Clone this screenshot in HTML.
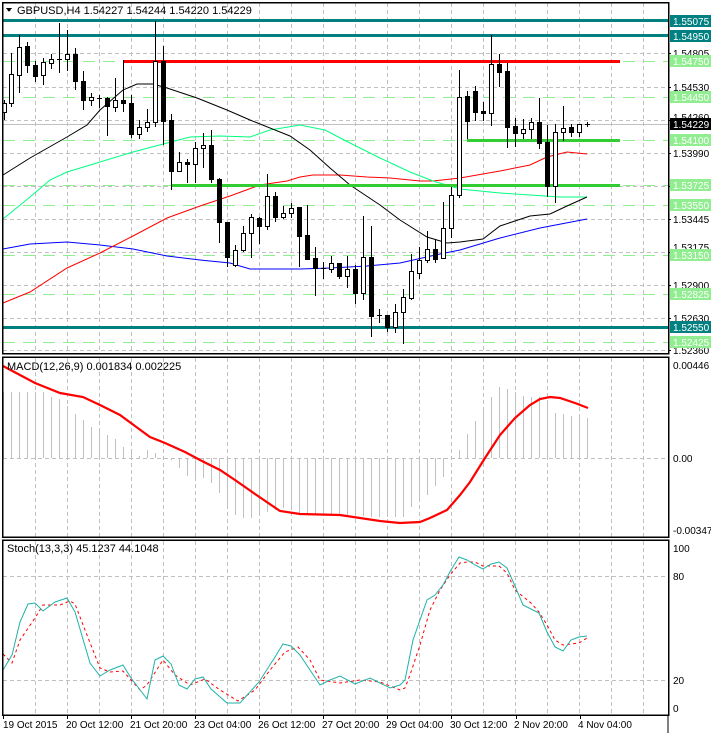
<!DOCTYPE html>
<html><head><meta charset="utf-8"><style>
html,body{margin:0;padding:0;background:#fff;width:711px;height:733px;overflow:hidden}
svg{display:block;font-family:"Liberation Sans",sans-serif;font-size:10px}
</style></head><body>
<svg id="s" width="711" height="733" viewBox="0 0 711 733" xmlns="http://www.w3.org/2000/svg" shape-rendering="crispEdges">
<rect width="711" height="733" fill="#fff"/>
<g id="grid" stroke="#c0c0c0" stroke-dasharray="4,3" stroke-width="1"></g>
<g stroke="#90ee90" stroke-dasharray="12,8" stroke-width="1">
<line x1="3" y1="61.5" x2="668" y2="61.5"/><line x1="3" y1="97.5" x2="668" y2="97.5"/>
<line x1="3" y1="140.5" x2="668" y2="140.5"/><line x1="3" y1="185.5" x2="668" y2="185.5"/>
<line x1="3" y1="205.5" x2="668" y2="205.5"/><line x1="3" y1="255.5" x2="668" y2="255.5"/>
<line x1="3" y1="294.5" x2="668" y2="294.5"/><line x1="3" y1="342.5" x2="668" y2="342.5"/>
</g>
<line x1="3" y1="124.5" x2="668" y2="124.5" stroke="#c0c0c0"/>
<g id="hist" stroke="#c0c0c0" stroke-width="1"></g>
<g fill="none" stroke-width="1" shape-rendering="auto">
<polyline stroke="#0000ff" points="3,249 30,244 67,242 100,245 133,249 167,256 200,260 230,263 250,269 300,269 330,268 367,266 400,263 440,254 460,250 500,238 540,228 587,219"/>
<polyline stroke="#ff0000" points="3,303 30,292 67,268 100,253 133,236 167,218 200,206 230,196 260,185 287,181 300,177 313,175 340,175 367,177 390,178 420,181 433,181 460,178 500,171 530,165 547,157 567,152 587,154"/>
<polyline stroke="#00ff7f" points="3,219 30,197 50,180 67,172 100,162 133,152 167,143 190,137 220,136 250,137 270,130 300,125 325,130 350,143 380,158 410,172 433,181 460,189 500,193 530,195 560,197 587,197"/>
<polyline stroke="#000" points="3,175 30,158 67,137 87,125 100,110 123,90 137,84 153,84 167,88 197,98 227,110 250,120 290,136 310,150 330,168 350,185 380,205 400,220 427,237 447,243 460,242 483,239 500,226 530,216 550,214 567,206 587,197"/>
</g>
<g>
<rect x="3" y="19" width="665" height="3" fill="#008080"/>
<rect x="3" y="34" width="665" height="3" fill="#008080"/>
<rect x="3" y="326" width="665" height="3" fill="#008080"/>
<rect x="123" y="60" width="497" height="3" fill="#ff0000"/>
<rect x="467" y="139" width="153" height="3" fill="#32cd32"/>
<rect x="171" y="184" width="449" height="3" fill="#32cd32"/>
</g>
<g id="candles"></g>
<polyline fill="none" stroke="#ff0000" stroke-width="2.2" shape-rendering="auto" points="3,366 20,375 35,383 60,393 83,397 100,405 120,415 135,426 150,437 165,443 185,452 200,460 220,470 235,480 255,494 280,511 300,514 340,515 380,521 400,523 420,522 430,518 447,510 460,495 470,482 485,458 500,435 515,418 530,405 540,399 550,397 560,398 575,403 588,408"/>
<polyline fill="none" stroke="#ff0000" stroke-dasharray="3,3" shape-rendering="auto" points="3,654 12,663 20,640 35,618 43,605 60,605 70,601 75,604 85,630 100,668 110,672 123,671 140,690 147,685 163,660 175,675 190,685 205,679 220,690 238,701 255,690 270,670 285,652 298,647 310,660 320,680 340,683 360,680 380,682 400,690 405,688 410,675 420,645 430,610 440,590 450,575 460,563 467,562 475,562 483,566 499,566 507,573 515,590 531,603 539,612 547,625 555,640 563,645 571,644 579,643 587,638"/>
<polyline fill="none" stroke="#20b2aa" shape-rendering="auto" points="3,670 12,655 20,622 28,604 35,603 43,611 55,602 67,598 75,612 90,663 100,676 110,670 123,665 131,678 147,699 155,660 163,656 171,664 179,685 187,689 195,679 203,677 211,689 227,703 240,703 259,682 275,657 283,644 291,646 300,655 310,670 320,685 330,680 340,676 355,684 370,678 380,683 390,688 400,685 405,680 413,640 427,600 435,595 443,585 451,570 459,557 467,560 475,565 483,569 491,564 499,562 507,568 515,586 523,605 531,609 539,613 547,632 555,647 563,651 571,640 579,637 587,636"/>
<g fill="none" stroke="#000" stroke-width="1.5">
<rect x="2.5" y="2.5" width="666" height="351"/>
<rect x="2.5" y="357" width="666" height="180"/>
<rect x="2.5" y="540" width="666" height="175"/>
</g>
<g stroke="#000"><line x1="668" y1="715" x2="668" y2="733"/></g>
<g id="ticks" stroke="#000"></g>
<polygon points="6,8 12,8 9,12" fill="#000"/>
<text x="17" y="14" fill="#000" font-size="11">GBPUSD,H4  1.54227 1.54244 1.54220 1.54229</text>
<text x="7" y="370" fill="#000" font-size="11">MACD(12,26,9) 0.001834 0.002225</text>
<text x="7" y="552" fill="#000" font-size="11">Stoch(13,3,3) 45.1237 44.1048</text>
<g fill="#000">
<text x="673" y="57">1.54805</text><text x="673" y="91">1.54530</text><text x="673" y="121">1.54260</text>
<text x="673" y="157">1.53990</text><text x="673" y="223">1.53445</text><text x="673" y="251">1.53175</text>
<text x="673" y="289">1.52900</text><text x="673" y="322">1.52630</text><text x="673" y="354">1.52360</text>
</g>
<g>
<rect x="670" y="15" width="41" height="12" fill="#008080"/><text x="673" y="25" fill="#fff">1.55075</text>
<rect x="670" y="30" width="41" height="12" fill="#008080"/><text x="673" y="40" fill="#fff">1.54950</text>
<rect x="670" y="55" width="41" height="12" fill="#90ee90"/><text x="673" y="65" fill="#fff">1.54750</text>
<rect x="670" y="91" width="41" height="12" fill="#90ee90"/><text x="673" y="101" fill="#fff">1.54450</text>
<rect x="670" y="118" width="41" height="12" fill="#000"/><text x="673" y="128" fill="#fff">1.54229</text>
<rect x="670" y="134" width="41" height="12" fill="#90ee90"/><text x="673" y="144" fill="#fff">1.54100</text>
<rect x="670" y="179" width="41" height="12" fill="#90ee90"/><text x="673" y="189" fill="#fff">1.53725</text>
<rect x="670" y="199" width="41" height="12" fill="#90ee90"/><text x="673" y="209" fill="#fff">1.53550</text>
<rect x="670" y="249" width="41" height="12" fill="#90ee90"/><text x="673" y="259" fill="#fff">1.53150</text>
<rect x="670" y="288" width="41" height="12" fill="#90ee90"/><text x="673" y="298" fill="#fff">1.52825</text>
<rect x="670" y="321" width="41" height="12" fill="#008080"/><text x="673" y="331" fill="#fff">1.52550</text>
<rect x="670" y="336" width="41" height="12" fill="#90ee90"/><text x="673" y="346" fill="#fff">1.52425</text>
</g>
<g fill="#000">
<text x="673" y="369">0.00446</text><text x="673" y="462">0.00</text><text x="673" y="534">-0.003478</text>
<text x="673" y="552">100</text><text x="673" y="580">80</text><text x="673" y="684">20</text><text x="673" y="712">0</text>
</g>
<g fill="#000">
<text x="3" y="728">19 Oct 2015</text><text x="66" y="728">20 Oct 12:00</text><text x="130" y="728">21 Oct 20:00</text>
<text x="194" y="728">23 Oct 04:00</text><text x="258" y="728">26 Oct 12:00</text><text x="322" y="728">27 Oct 20:00</text>
<text x="386" y="728">29 Oct 04:00</text><text x="450" y="728">30 Oct 12:00</text><text x="514" y="728">2 Nov 20:00</text>
<text x="578" y="728">4 Nov 04:00</text>
</g>
</svg>
<script>
var NS="http://www.w3.org/2000/svg";
function el(p,t,a){var e=document.createElementNS(NS,t);for(var k in a)e.setAttribute(k,a[k]);p.appendChild(e);return e;}
var g=document.getElementById('grid');
for(var x=35;x<=648;x+=32){
 el(g,'line',{x1:x+.5,y1:3,x2:x+.5,y2:353});el(g,'line',{x1:x+.5,y1:358,x2:x+.5,y2:537});el(g,'line',{x1:x+.5,y1:541,x2:x+.5,y2:715});
}
[53,87,120,153,186,219,252,285,318,350,458,576,680].forEach(function(y){el(g,'line',{x1:3,y1:y+.5,x2:668,y2:y+.5});});
var tk=document.getElementById('ticks');
[3,67,131,195,259,323,387,451,516,580].forEach(function(x){el(tk,'line',{x1:x+.5,y1:715,x2:x+.5,y2:719});});
[53,87,120,153,186,219,252,285,318,350].forEach(function(y){el(tk,'line',{x1:668,y1:y+.5,x2:671,y2:y+.5});});
var C=[[4,100,103,112,120,1],[11,53,74,103,107,1],[19,35,47,75,93,1],[27,42,46,65,73,0],[35,61,65,76,82,0],[43,58,62,75,85,1],[51,54,59,63,69,1],[59,23,59,59,73,1],[67,30,54,59,71,1],[75,48,54,81,90,0],[83,71,81,100,110,0],[91,93,97,100,106,1],[99,95,98,98,108,1],[107,97,98,106,136,0],[115,78,100,107,112,1],[123,60,100,103,112,0],[131,95,103,134,138,0],[139,120,127,134,139,1],[147,109,122,127,132,1],[155,21,61,122,127,1],[163,46,61,121,145,0],[171,114,120,171,190,0],[179,152,162,171,172,1],[187,159,162,164,183,0],[195,142,148,164,183,1],[203,133,145,148,168,1],[211,130,145,179,183,0],[219,178,179,222,243,0],[227,222,222,257,267,0],[235,245,250,265,267,1],[243,226,233,250,252,1],[251,214,217,233,258,1],[259,217,218,226,244,0],[267,174,196,226,230,1],[275,192,196,217,222,0],[283,206,213,217,219,1],[291,203,208,213,218,1],[299,207,207,236,267,0],[307,205,235,259,260,0],[315,247,258,268,296,0],[323,262,268,268,279,1],[331,256,263,269,273,1],[339,263,263,276,279,0],[347,256,269,276,288,1],[355,265,269,293,304,0],[363,216,257,293,300,1],[371,226,257,316,337,0],[379,309,315,315,323,1],[387,315,315,327,332,0],[395,304,312,327,333,1],[403,289,297,312,344,1],[411,254,271,298,300,1],[419,247,260,273,279,1],[427,231,249,260,263,1],[435,239,249,259,263,0],[443,202,228,258,258,1],[451,187,195,228,238,1],[459,70,97,195,198,1],[467,91,96,121,139,0],[475,86,91,112,121,0],[483,102,111,113,121,0],[491,35,64,113,126,1],[499,54,64,72,87,0],[507,63,71,127,148,0],[515,118,126,133,147,0],[523,119,129,133,139,1],[531,118,122,129,139,1],[539,98,122,143,149,0],[547,125,142,186,197,0],[555,124,132,186,203,1],[563,106,128,132,141,1],[571,124,127,132,137,0],[579,124,124,132,137,1]];
var cg=document.getElementById('candles');
C.forEach(function(c){
 var x=c[0];
 el(cg,'line',{x1:x+.5,y1:c[1],x2:x+.5,y2:c[4],stroke:'#000'});
 var h=c[3]-c[2];
 if(h<1){el(cg,'line',{x1:x-2,y1:c[2]+.5,x2:x+3,y2:c[2]+.5,stroke:'#000'});}
 else if(c[5])el(cg,'rect',{x:x-2+.5,y:c[2]+.5,width:4,height:h,fill:'#fff',stroke:'#000'});
 else el(cg,'rect',{x:x-2,y:c[2],width:5,height:h+1,fill:'#000'});
});
el(cg,'line',{x1:585,y1:124.5,x2:590,y2:124.5,stroke:'#000'});
el(cg,'line',{x1:587.5,y1:122,x2:587.5,y2:127,stroke:'#000'});
var H=[[3,392],[43,392],[51,397],[59,399],[67,406],[75,414],[83,420],[91,427],[99,431],[107,435],[115,439],[123,447],[131,452],[139,456],[147,450],[155,453],[163,457],[171,460],[179,468],[187,476],[195,477],[203,478],[211,483],[219,493],[227,508],[235,515],[243,518],[251,518],[259,513],[267,512],[275,510],[283,508],[291,510],[299,513],[315,515],[331,516],[355,516],[379,517],[395,517],[403,517],[411,507],[419,501],[427,495],[435,486],[443,477],[451,458],[459,450],[467,434],[475,421],[483,407],[491,397],[499,387],[507,389],[515,392],[523,396],[531,397],[539,397],[547,400],[555,413],[563,414],[571,416],[579,416],[587,418]];
function interp(x){for(var i=0;i<H.length-1;i++){if(x>=H[i][0]&&x<=H[i+1][0]){var t=(x-H[i][0])/(H[i+1][0]-H[i][0]);return H[i][1]+t*(H[i+1][1]-H[i][1]);}}return H[H.length-1][1];}
var hg=document.getElementById('hist');
for(var x=3;x<=587;x+=8){var y=Math.round(interp(x));el(hg,'line',{x1:x+.5,y1:458,x2:x+.5,y2:y});}
</script>
</body></html>
